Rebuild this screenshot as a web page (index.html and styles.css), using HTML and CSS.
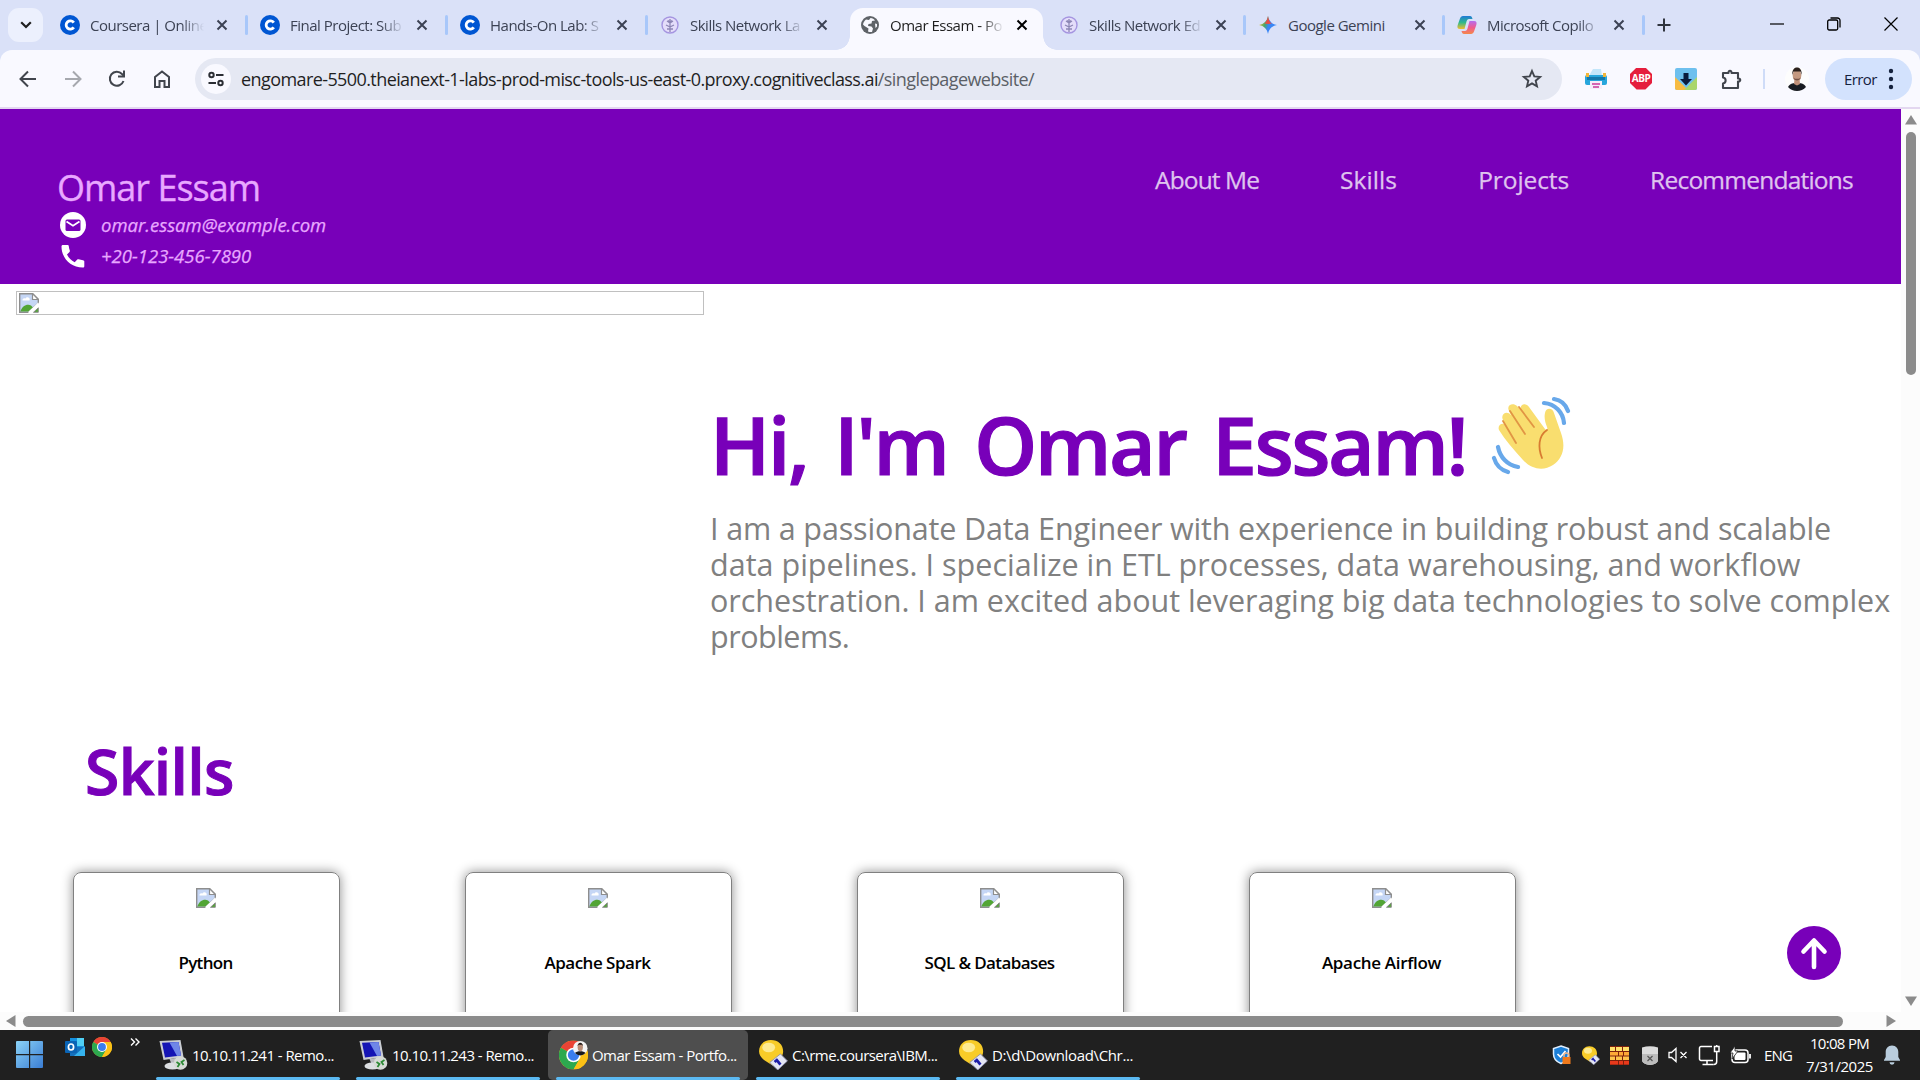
FILE: index.html
```html
<!DOCTYPE html>
<html lang="en">
<head>
<meta charset="utf-8">
<title>Omar Essam - Portfolio</title>
<link rel="stylesheet" href="styles.css">
</head>
<body>
<svg class="defs" aria-hidden="true">
  <symbol id="x" viewBox="0 0 12 12"><path d="M1.5 1.5l9 9M10.5 1.5l-9 9" fill="none" stroke="currentColor" stroke-width="2"/></symbol>
  <symbol id="coursera" viewBox="0 0 20 20"><circle cx="10" cy="10" r="10" fill="#0056d2"/><path d="M13.8 7.6A4.2 4.2 0 1 0 13.8 12.4" fill="none" stroke="#fff" stroke-width="2.8"/></symbol>
  <symbol id="network" viewBox="0 0 20 20"><circle cx="10" cy="10" r="8" fill="#e4ddfa" stroke="#a595e0" stroke-width="1.4"/><path d="M10 4v13M10 8l-3-2M10 8l3-2M10 12l-4-2M10 12l4-2M10 14l-3 0M10 14l3 0M8 5.5l2 1.5 2-1.5" fill="none" stroke="#8d87b5" stroke-width="1.3"/></symbol>
  <symbol id="broken" viewBox="0 0 20 20"><path d="M.7.7h13l5.6 5.6v4L9 19.3H.7z" fill="#c5d6f5" stroke="#8e8e8e" stroke-width="1.4"/><path d="M13.5.7v5.8h5.8z" fill="#fff" stroke="#8e8e8e" stroke-width="1.2"/><path d="M3.5 7.5a2 2 0 0 1 3-2 2.2 2.2 0 0 1 4 2z" fill="#fff"/><path d="M1.4 18.6c1.5-5 6-8 10.6-6.2l2 2-4.600 4.200z" fill="#52a535"/><path d="M14.500 19.300l4.800-4.500v4.500z" fill="#52a535" stroke="#8e8e8e"/><path d="M10 20L20 10.500" stroke="#fff" stroke-width="2.600"/></symbol>
  <symbol id="chrome" viewBox="0 0 24 24"><circle cx="12" cy="12" r="12" fill="#fbc116"/><path d="M12 12L1.600 6A12 12 0 0 1 22.400 6z" fill="#ea4335"/><path d="M12 12L1.600 6A12 12 0 0 0 12 24l5.200-9z" fill="#2da94f"/><path d="M12 6h10.400A12 12 0 0 1 12 24l5.200-9z" fill="#fbc116"/><circle cx="12" cy="12" r="6" fill="#fff"/><circle cx="12" cy="12" r="4.700" fill="#3b7ded"/></symbol>
  <symbol id="remote" viewBox="0 0 28 30"><path d="M0 1l21-1 3 17-20 3z" fill="#c9ccd2"/><path d="M2.500 2.800L19 2l2.500 13.500-16 2z" fill="#1414b4"/><path d="M10 2.400L19 2l2.500 13.500-4 .5z" fill="#6f86e8"/><path d="M10 19l6-1 1 6h-5z" fill="#b9bcc0"/><ellipse cx="13" cy="26" rx="8" ry="3.600" fill="#dcdfe2"/><circle cx="21" cy="23" r="6.800" fill="#d6dad6"/><path d="M17 22l3 2-2 3M25 20l-3 2 2 3" fill="none" stroke="#2c8a35" stroke-width="1.800"/></symbol>
  <symbol id="bulb" viewBox="0 0 27 28"><path d="M11 0c7 0 11.500 4.500 11.500 10.500 0 4-2 6-4 8.500L13 24 5 19C2 16.500 0 14 0 10.500 0 4.500 4.500 0 11 0z" fill="#f8cc28"/><ellipse cx="9" cy="7" rx="6" ry="4.500" fill="#fdeb92"/><path d="M10 21l10-8 6.500 6.500-9 8.500z" fill="#e4e6f4" stroke="#8d8fb0" stroke-width=".8"/><path d="M16 18l4 5M14.500 20.500l3-2.500" stroke="#1d1da8" stroke-width="2.600"/></symbol>
</svg>

<header class="tabs">
  <button class="tab-search"><svg width="12" height="8" viewBox="0 0 12 8"><path d="M1.200 1.200L6 6l4.800-4.800" fill="none" stroke="#1f1f1f" stroke-width="2.200"/></svg></button>
  <div class="tab"><svg class="fav"><use href="#coursera"/></svg><span class="title">Coursera | Online</span><svg class="x"><use href="#x"/></svg></div>
  <div class="tab sep"><svg class="fav"><use href="#coursera"/></svg><span class="title">Final Project: Sub</span><svg class="x"><use href="#x"/></svg></div>
  <div class="tab sep"><svg class="fav"><use href="#coursera"/></svg><span class="title">Hands-On Lab: S</span><svg class="x"><use href="#x"/></svg></div>
  <div class="tab sep"><svg class="fav"><use href="#network"/></svg><span class="title">Skills Network La</span><svg class="x"><use href="#x"/></svg></div>
  <div class="tab active"><svg class="fav" viewBox="0 0 20 20"><circle cx="10" cy="10" r="9" fill="#5f6368"/><path d="M10.500 3c2 0 3.500 1 4.500 2.500l-3 .5-.5 2.500-3 .5-.5 2 3.500.5 1.500 2-1 3.500a7 7 0 0 1-4-.5l.5-3L4.500 11 3 9.500c.3-2 1.500-4 3-5L9 5zM15 8.500l2 .5v2.500l-1.500 1.500z" fill="#f9f9ff"/></svg><span class="title">Omar Essam - Po</span><svg class="x"><use href="#x"/></svg></div>
  <div class="tab narrow"><svg class="fav"><use href="#network"/></svg><span class="title">Skills Network Ed</span><svg class="x"><use href="#x"/></svg></div>
  <div class="tab narrow sep"><svg class="fav" viewBox="0 0 20 20"><defs><linearGradient id="gem" x1="0" y1=".3" x2="1" y2=".6"><stop offset="0" stop-color="#f6c026"/><stop offset=".35" stop-color="#45a86a"/><stop offset=".55" stop-color="#3a86f5"/></linearGradient></defs><path d="M10 1c.9 5 4 8.100 9 9-5 .9-8.100 4-9 9-.9-5-4-8.100-9-9 5-.9 8.100-4 9-9z" fill="url(#gem)"/><path d="M10 1c.9 5 2 6.500 4 7.600L10 9 6.500 8.500C8.500 7 9.500 4 10 1z" fill="#ea4c45"/></svg><span class="title full">Google Gemini</span><svg class="x"><use href="#x"/></svg></div>
  <div class="tab narrow sep"><svg class="fav" viewBox="0 0 20 20"><defs><linearGradient id="ca" x1="0" y1="0" x2="0" y2="1"><stop offset="0" stop-color="#1f79d8"/><stop offset=".5" stop-color="#2fb98c"/><stop offset="1" stop-color="#f2bd2d"/></linearGradient><linearGradient id="cb" x1="0" y1="0" x2="0" y2="1"><stop offset="0" stop-color="#b56cf0"/><stop offset=".5" stop-color="#ee5c8f"/><stop offset="1" stop-color="#f5884a"/></linearGradient></defs><path d="M6 1h7c1.500 0 2 1 2.500 3H12c-1.500 0-2 1-2.500 2.500L7.500 14H3c-2.500 0-3-1.500-2.300-4L3 3.500C3.500 2 4.500 1 6 1z" fill="url(#ca)"/><path d="M14 19H7c-1.500 0-2-1-2.500-3H8c1.500 0 2-1 2.500-2.500L12.500 6H17c2.500 0 3 1.500 2.300 4L17 16.500c-.5 1.500-1.500 2.500-3 2.500z" fill="url(#cb)"/></svg><span class="title">Microsoft Copilo</span><svg class="x"><use href="#x"/></svg></div>
  <div class="newtab sep"><svg width="14" height="14" viewBox="0 0 14 14"><path d="M7 .5v13M.5 7h13" stroke="#30353f" stroke-width="2"/></svg></div>
  <div class="wincontrols">
    <svg width="14" height="14" viewBox="0 0 14 14"><path d="M0 7h14" stroke="#000" stroke-width="1.200"/></svg>
    <svg width="14" height="14" viewBox="0 0 14 14" fill="none" stroke="#000" stroke-width="1.300"><rect x=".7" y="3" width="10" height="10" rx="1.500"/><path d="M3.500 1h7A2.500 2.500 0 0 1 13 3.500V10.500"/></svg>
    <svg width="14" height="14" viewBox="0 0 14 14"><path d="M.5.5l13 13M13.500.5l-13 13" stroke="#000" stroke-width="1.200"/></svg>
  </div>
</header>

<div class="toolbarwrap"><nav class="toolbar">
  <div class="navicons">
    <svg width="18" height="18" viewBox="0 0 18 18" fill="none" stroke="#41454d" stroke-width="2"><path d="M17 9H2M9 1.500L1.500 9 9 16.500"/></svg>
    <svg width="18" height="18" viewBox="0 0 18 18" fill="none" stroke="#a6a8ae" stroke-width="2"><path d="M1 9h15M9 1.500L16.500 9 9 16.500"/></svg>
    <svg width="18" height="18" viewBox="0 0 18 18" fill="none" stroke="#41454d" stroke-width="2"><path d="M15.500 11A7 7 0 1 1 14 4l2 2"/><path d="M16 .5v6h-6"/></svg>
    <svg width="18" height="18" viewBox="0 0 18 18" fill="none" stroke="#41454d" stroke-width="2"><path d="M2 7l7-5.500L16 7v10h-4.500v-6h-5v6H2z"/></svg>
  </div>
  <div class="omnibox">
    <span class="tune"><svg width="16" height="16" viewBox="0 0 16 16" fill="none" stroke="#2b2e34" stroke-width="2"><circle cx="3.500" cy="4" r="2.200"/><path d="M8 4h7.500M.5 12H8"/><circle cx="12.500" cy="12" r="2.200"/></svg></span>
    <span class="url">engomare-5500.theianext-1-labs-prod-misc-tools-us-east-0.proxy.cognitiveclass.ai<span class="path">/singlepagewebsite/</span></span>
    <svg class="star" width="20" height="20" viewBox="0 0 20 20"><path d="M10 2l2.300 5.400 5.800.5-4.400 3.800 1.300 5.700-5-3-5 3 1.300-5.700L1.900 7.900l5.800-.5z" fill="none" stroke="#41454d" stroke-width="1.900"/></svg>
  </div>
  <div class="exts">
    <svg width="22" height="22" viewBox="0 0 22 22"><path d="M5 6l3-5h8l1 7H5z" fill="#c3e6fa"/><rect x="0" y="7" width="22" height="10" rx="2" fill="#27a6dc"/><path d="M1 9V5h3v4zM18 9V5h3v4z" fill="#f2b63a"/><rect x="2" y="9" width="18" height="3" fill="#1478aa"/><rect x="5" y="13" width="12" height="8" fill="#f4eefa"/><path d="M7 16h8M8 19h6" stroke="#c93a9c" stroke-width="1.500"/></svg>
    <span class="abp">ABP</span>
    <svg width="22" height="22" viewBox="0 0 22 22"><rect width="22" height="22" rx="2" fill="#6ec0ee"/><path d="M0 9l13 13H2a2 2 0 0 1-2-2z" fill="#f7bb42"/><path d="M22 9L9 22h11a2 2 0 0 0 2-2z" fill="#a9d66c"/><path d="M8.500 5h5v6H17l-6 6.500L5 11h3.500z" fill="#0a1b3d"/></svg>
    <svg width="22" height="22" viewBox="0 0 22 22"><path d="M3 5h5.500c-.5-3 3.500-3 3 0H18v5.500c3-.5 3 3.500 0 3V20H3v-4.500c3.500-.5 3.500-5.500 0-6z" fill="none" stroke="#41454d" stroke-width="2.100" stroke-linejoin="round"/></svg>
  </div>
  <i class="bar"></i>
  <svg class="avatar" width="24" height="24" viewBox="0 0 24 24"><circle cx="12" cy="12" r="12" fill="#fdfdfd"/><path d="M3 20c2-4 6-4 9-4s7 0 9 4a12 12 0 0 1-18 0z" fill="#191c22"/><path d="M9.500 12h5l.5 5-3 1.500L9 17z" fill="#c09078"/><ellipse cx="12" cy="8.500" rx="4.300" ry="6" fill="#c39880"/><path d="M7.300 8C7 3 9 .5 12 .5S17 3 16.700 8L15.500 4.500h-7z" fill="#2b211d"/><path d="M8.300 10.500c1 4 6.400 4 7.400 0l-1.700 1.200h-4z" fill="#735145"/></svg>
  <div class="errorpill"><span>Error</span><svg width="6" height="22" viewBox="0 0 6 22" fill="#14213d"><circle cx="3" cy="3" r="2.200"/><circle cx="3" cy="11" r="2.200"/><circle cx="3" cy="19" r="2.200"/></svg></div>
</nav></div>

<div class="viewport">
  <main class="page">
    <section class="top">
      <div class="ident">
        <div class="name">Omar Essam</div>
        <div class="contact"><svg width="26" height="26" viewBox="0 0 26 26"><circle cx="13" cy="13" r="13" fill="#fff"/><rect x="5.500" y="7.500" width="15" height="11.500" rx="1.500" fill="#7800b9"/><path d="M6.500 9.500l6.500 4.200 6.500-4.200" fill="none" stroke="#fff" stroke-width="1.800"/></svg><span>omar.essam@example.com</span></div>
        <div class="contact"><svg width="26" height="26" viewBox="0 0 26 26"><path d="M1.500 3.500c0-1 .5-1.500 1.500-1.500h4.500c.8 0 1.200.4 1.300 1.200.2 1.600.5 3 1 4.300.2.600 0 1-.3 1.400L7 11.500c1.700 3.400 4.300 6 7.700 7.700l2.600-2.600c.4-.3.800-.5 1.400-.3 1.300.500 2.700.800 4.300.900.800.100 1.300.600 1.300 1.400V23c0 1-.5 1.500-1.500 1.500C10.500 24.500 1.500 15 1.500 3.500z" fill="#fff"/></svg><span>+20-123-456-7890</span></div>
      </div>
      <nav class="links">
        <a class="n1">About Me</a><a class="n2">Skills</a><a class="n3">Projects</a><a class="n4">Recommendations</a>
      </nav>
    </section>
    <section class="about">
      <div class="portrait"><svg class="broken"><use href="#broken"/></svg></div>
      <div class="intro">
        <h1><span>Hi, I'm Omar Essam!</span><svg class="wave" width="78" height="78" viewBox="0 0 78 78"><g transform="translate(-2 -1)"><path d="M9 34c-2-5 4-9 7-4l-3-6c-3-6 4-10 8-5l-2-4c-3-6 4-9 8-5l4 4c-2-6 5-8 8-3l16 22c2 2 3 1 2-2-2-5-3-10-2-14 1-6 8-5 9 0l7 20c5 14 2 25-8 32-9 6-21 5-30-5C24 54 15 44 9 34z" fill="#f9de6f"/><path d="M13 25l13 22M20 15l15 23M29 11l15 20" fill="none" stroke="#e19544" stroke-width="1.800" stroke-linecap="round"/><path d="M57 34c-9 6-9 18-5 28" fill="none" stroke="#d87c31" stroke-width="1.800" stroke-linecap="round"/></g><g fill="none" stroke="#68a8ea" stroke-width="4.200" stroke-linecap="round"><path d="M52 6c11 1 19 9 20 20M62 2c7 1 12 6 14 12M6 50c2 10 9 18 20 20M2 61c2 7 7 12 14 14"/></g></svg></h1>
        <p><span class="l1">I am a passionate Data Engineer with experience in building robust and scalable</span><span class="l2">data pipelines. I specialize in ETL processes, data warehousing, and workflow</span><span class="l3">orchestration. I am excited about leveraging big data technologies to solve complex</span><span class="l4">problems.</span></p>
      </div>
    </section>
    <section class="skills">
      <h2><span>Skills</span></h2>
      <div class="cards">
        <article><svg class="broken"><use href="#broken"/></svg><span class="c1">Python</span></article>
        <article><svg class="broken"><use href="#broken"/></svg><span class="c2">Apache Spark</span></article>
        <article><svg class="broken"><use href="#broken"/></svg><span class="c3">SQL &amp; Databases</span></article>
        <article><svg class="broken"><use href="#broken"/></svg><span class="c4">Apache Airflow</span></article>
      </div>
    </section>
    <a class="scrolltop"><svg width="54" height="54" viewBox="0 0 54 54"><circle cx="27" cy="27" r="27" fill="#7800b9"/><path d="M27 41V15M16.500 25.500L27 14.500l10.500 11" fill="none" stroke="#fff" stroke-width="4.600" stroke-linecap="round" stroke-linejoin="round"/></svg></a>
  </main>
  <div class="vscroll"><svg width="12" height="10" viewBox="0 0 12 10"><path d="M6 0l6 9.500H0z" fill="#8b8b8b"/></svg><i></i><svg width="12" height="10" viewBox="0 0 12 10"><path d="M6 10l6-9.500H0z" fill="#8b8b8b"/></svg></div>
</div>
<div class="hscroll"><svg width="10" height="12" viewBox="0 0 10 12"><path d="M0 6l9.500-6v12z" fill="#8b8b8b"/></svg><i></i><svg width="10" height="12" viewBox="0 0 10 12"><path d="M10 6L.5 0v12z" fill="#8b8b8b"/></svg></div>

<footer class="taskbar">
  <svg class="start" width="27" height="27" viewBox="0 0 27 27"><defs><linearGradient id="win" x1="0" y1="0" x2="1" y2="1"><stop offset="0" stop-color="#8bd3f7"/><stop offset="1" stop-color="#3a7dd4"/></linearGradient></defs><path d="M1 0h12v13H0V1a1 1 0 0 1 1-1zM14.200 0H26a1 1 0 0 1 1 1v12H14.200zM0 14.200h13V27H1a1 1 0 0 1-1-1zM14.200 14.200H27V26a1 1 0 0 1-1 1H14.200z" fill="url(#win)"/></svg>
  <div class="quick">
    <svg width="20" height="20" viewBox="0 0 20 20"><rect x="5" y="1" width="14" height="17" fill="#1490df"/><rect x="12" y="1" width="7" height="8" fill="#50d0f5"/><path d="M5 10h15v9H5z" fill="#1570bd"/><path d="M20 9v10H9z" fill="#35b3ee"/><rect y="4" width="12" height="12" rx="1" fill="#0a64b5"/><ellipse cx="6" cy="10" rx="2.600" ry="3" fill="none" stroke="#fff" stroke-width="1.700"/></svg>
    <svg width="20" height="20"><use href="#chrome"/></svg>
    <svg width="10" height="8" viewBox="0 0 10 8"><path d="M1 .5L4.500 4 1 7.500M5.500.5L9 4 5.500 7.500" fill="none" stroke="#fff" stroke-width="1.400"/></svg>
  </div>
  <div class="task"><svg class="ti"><use href="#remote"/></svg><span>10.10.11.241 - Remo...</span></div>
  <div class="task"><svg class="ti"><use href="#remote"/></svg><span>10.10.11.243 - Remo...</span></div>
  <div class="task on"><svg class="ti" viewBox="0 0 30 30"><use href="#chrome" width="30" height="30"/><circle cx="22" cy="8" r="7.500" fill="#f4f4f4"/><path d="M16.500 13c2-2.500 9-2.500 11 0a7.500 7.500 0 0 1-11 0z" fill="#17181c"/><ellipse cx="22" cy="7" rx="2.700" ry="4.200" fill="#b98d77"/><path d="M19.200 6c0-5 5.600-5 5.600 0l-1-1.500h-3.600z" fill="#221a18"/></svg><span>Omar Essam - Portfo...</span></div>
  <div class="task"><svg class="ti"><use href="#bulb"/></svg><span>C:\rme.coursera\IBM...</span></div>
  <div class="task"><svg class="ti"><use href="#bulb"/></svg><span class="dl">D:\d\Download\Chr...</span></div>
  <div class="tray">
    <svg width="20" height="20" viewBox="0 0 20 20"><path d="M9 1l7.500 2.500V9c0 5-3.500 8-7.500 9.500C5 17 1.500 14 1.500 9V3.500z" fill="#1b7fd8" stroke="#dfefff" stroke-width="1.500"/><path d="M5.500 9l3 3 5-6" fill="none" stroke="#fff" stroke-width="1.700"/><path d="M12 12v-1.500a2.500 2.500 0 0 1 5 0V12" fill="none" stroke="#f0b58a" stroke-width="1.400"/><rect x="10.500" y="12" width="8" height="7" fill="#f07a1c"/></svg>
    <svg width="18" height="19"><use href="#bulb"/></svg>
    <svg width="19" height="19" viewBox="0 0 19 19"><rect width="19" height="19" fill="#7c200c"/><path d="M0 1h5v4H0zM6 1h6v4H6zM13 1h6v4h-6z" fill="#ffe06a"/><path d="M0 6h8v3.500H0zM9 6h4v3.500H9zM14 6h5v3.500h-5z" fill="#fdaa36"/><path d="M0 10.500h5V14H0zM6 10.500h6V14H6zM13 10.500h6V14h-6z" fill="#fdc34a"/><path d="M0 15h8v3.500H0zM9 15h4v3.500H9zM14 15h5v3.500h-5z" fill="#e8391c"/></svg>
    <svg class="usb" width="16" height="19" viewBox="0 0 16 19"><path d="M0 1.500Q8-1 16 1.500V14c0 3-4 4.500-8 5-4-.5-8-2-8-5z" fill="#dcdcdc"/><path d="M0 8h16v6c0 3-4 4.500-8 5-4-.5-8-2-8-5z" fill="#bcbcbc"/><path d="M5.500 10l5 5M10.500 10l-5 5" stroke="#555" stroke-width="1.200"/></svg>
    <svg width="20" height="16" viewBox="0 0 20 16" fill="none" stroke="#fff" stroke-width="1.300"><path d="M1 5.500h2.500L8 1.500v13l-4.500-4H1zM12.500 5l6 6M18.500 5l-6 6"/></svg>
    <svg width="22" height="21" viewBox="0 0 22 21" fill="none" stroke="#fff" stroke-width="1.500"><path d="M14 1.500H3a1.500 1.500 0 0 0-1.500 1.500v11A1.500 1.500 0 0 0 3 15.500h12M9 15.500v4M4.500 19.500h11M16.500 1.500h4.500v5h-4.500zM18.700 6.500v10q0 3-3 3M18.700 1v-1"/></svg>
    <svg width="21" height="18" viewBox="0 0 21 18"><rect x="2" y="4" width="16" height="12.500" rx="3" fill="none" stroke="#fff" stroke-width="1.500"/><rect x="4.500" y="6.500" width="11" height="7.500" rx="1" fill="#fff"/><path d="M20 8v4.500" stroke="#fff" stroke-width="1.800"/><path d="M5 0L0 7h3l-1 6 6-8H5z" fill="#fff" stroke="#202020" stroke-width=".8"/></svg>
    <span class="lang">ENG</span>
    <div class="clock"><span class="time">10:08 PM</span><span class="date">7/31/2025</span></div>
    <svg width="18" height="20" viewBox="0 0 18 20"><path d="M9 .5c4 0 6.300 3 6.300 6.500v5l1.700 3v.8H1V15l1.700-3V7C2.700 3.500 5 .5 9 .5zM6.500 17.200h5a2.500 2.500 0 0 1-5 0z" fill="#b9cddd"/></svg>
  </div>
</footer>
</body>
</html>
```
FILE: styles.css
```css
* { box-sizing: border-box; }
body { margin: 0; width: 1920px; height: 1080px; overflow: hidden; display: flex; flex-direction: column; background: #fff; font-family: "Open Sans", "Noto Sans", sans-serif; }
svg { display: block; flex: none; overflow: visible; }
.defs { position: absolute; width: 0; height: 0; }
span, a { white-space: nowrap; }

.tabs { height: 50px; flex: none; background: #dae1f8; display: flex; align-items: flex-start; padding-left: 8px; }
.tab-search { width: 35px; height: 34px; margin: 8px 7px 0 0; padding: 0; border: 0; border-radius: 11px; background: #ecf0fd; display: flex; align-items: center; justify-content: center; }
.tab { width: 200px; height: 42px; margin-top: 8px; display: flex; align-items: center; padding: 0 0 8px 10px; position: relative; color: #3c4254; }
.narrow { width: 199px; left: -1px; }
.fav { width: 20px; height: 20px; }
.title { width: 114px; margin-left: 10px; overflow: hidden; font-size: 15px; letter-spacing: -.5px; line-height: 24px; -webkit-mask-image: linear-gradient(90deg, #000 80%, transparent); mask-image: linear-gradient(90deg, #000 80%, transparent); }
.full { -webkit-mask-image: none; mask-image: none; }
.x { width: 12px; height: 12px; margin-left: 12px; color: #3c4254; }
.sep::before { content: ""; position: absolute; left: -5px; top: 7px; width: 3px; height: 20px; border-radius: 2px; background: #a8c7fa; }
.active { color: #1f1f1f; }
.active .x { color: #000; }
.active::before { content: ""; position: absolute; left: 0; right: 7px; top: 0; bottom: 0; background: #f9f9ff; border-radius: 13px 13px 0 0; }
.active::after { content: ""; position: absolute; left: -14px; right: -7px; bottom: 0; height: 14px; background: radial-gradient(circle at 0 0, transparent 13.500px, #f9f9ff 14px) left / 14px 14px no-repeat, radial-gradient(circle at 100% 0, transparent 13.500px, #f9f9ff 14px) right / 14px 14px no-repeat; }
.active > * { position: relative; }
.newtab { position: relative; margin-top: 8px; padding: 10px 0 0 10px; }
.wincontrols { margin: 17px 22px 0 auto; display: flex; gap: 43px; }

.toolbarwrap { background: #dae1f8; flex: none; }
.toolbar { height: 59px; background: #f9f9ff; border-radius: 12px 12px 0 0; border-bottom: 2px solid #e3d7f0; display: flex; align-items: center; padding: 0 8px 0 19px; }
.navicons { display: flex; gap: 26.500px; width: 176px; }
.omnibox { width: 1367px; height: 42px; border-radius: 21px; background: #e5e8f3; display: flex; align-items: center; padding-left: 6px; }
.tune { width: 30px; height: 30px; border-radius: 50%; background: #f9f9ff; display: flex; align-items: center; justify-content: center; }
.url { margin-left: 10px; font-size: 18px; letter-spacing: -.587px; line-height: 30px; color: #1f1f1f; }
.path { color: #5b5f66; }
.star { margin: 0 20px 0 auto; }
.exts { display: flex; align-items: center; gap: 23px; margin-left: 23px; }
.abp { width: 22px; height: 22px; background: #e51e3d; color: #fff; font-size: 10px; font-weight: 700; letter-spacing: -.5px; line-height: 21px; text-align: center; clip-path: polygon(30% 0, 70% 0, 100% 30%, 100% 70%, 70% 100%, 30% 100%, 0 70%, 0 30%); }
.bar { width: 2px; height: 20px; background: #cfdcf8; margin-left: 21px; }
.avatar { margin-left: 20px; }
.errorpill { margin-left: auto; width: 87px; height: 42px; border-radius: 21px; background: #d3e2fd; display: flex; align-items: center; justify-content: space-between; padding: 0 18px 0 19px; font-size: 15px; letter-spacing: -.6px; color: #14213d; }

.viewport { height: 903px; flex: none; display: flex; }
.page { width: 1901px; overflow: hidden; background: #fff; position: relative; }
.top { height: 175px; background: #7800b9; display: flex; justify-content: space-between; padding: 0 48px 0 57px; }
.name { margin-top: 55px; height: 45px; line-height: 48px; font-size: 36px; letter-spacing: -1px; color: #e8a8ff; -webkit-text-stroke: .3px #e8a8ff; }
.contact { display: flex; align-items: center; gap: 15px; height: 31px; margin-left: 3px; font-size: 18.500px; font-style: italic; color: #e8a8ff; -webkit-text-stroke: .25px #e8a8ff; }
.links { display: flex; gap: 81px; margin-top: 56px; font-size: 24.500px; line-height: 30px; color: #dfc4ee; -webkit-text-stroke: .25px #dfc4ee; }
.n1 { letter-spacing: -.89px; }
.n2 { letter-spacing: .08px; }
.n3 { letter-spacing: -.08px; }
.n4 { letter-spacing: -.77px; }
.about { height: 376px; display: flex; }
.portrait { flex: none; margin: 7px 0 0 16px; width: 688px; height: 24px; border: 1px solid #c0c0c0; padding: 1px 2px; }
.broken { width: 20px; height: 20px; }
.intro { flex: none; margin-left: 6px; padding-top: 100px; }
h1 { margin: 0; height: 120px; line-height: 119px; font-size: 80px; font-weight: 600; letter-spacing: -2.200px; word-spacing: 8px; color: #7800b9; -webkit-text-stroke: 1.200px #7800b9; display: flex; }
h1 span { width: 754px; }
.wave { margin: 13px 0 0 28px; }
p { margin: 6px 0 0; font-size: 30.500px; line-height: 36px; color: #808080; display: flex; flex-direction: column; align-items: flex-start; }
.l1 { letter-spacing: -.15px; }
.l2 { letter-spacing: .02px; }
.l3 { letter-spacing: -.02px; }
.l4 { letter-spacing: -.5px; }
.skills { padding: 0 0 0 73px; }
h2 { margin: 0 0 0 12px; padding-top: 69px; height: 212px; line-height: 84px; font-size: 62.500px; font-weight: 600; letter-spacing: -.700px; color: #7800b9; -webkit-text-stroke: 1px #7800b9; }
.cards { display: flex; gap: 125px; }
article { width: 267px; height: 200px; border: 1px solid #808080; border-radius: 8px; box-shadow: 0 0 12px rgba(0, 0, 0, .45); display: flex; flex-direction: column; align-items: center; padding: 15px 2px 0 0; gap: 43px; font-size: 17px; line-height: 24px; font-weight: 600; color: #000; }
.c1 { letter-spacing: -.7px; }
.c2 { letter-spacing: -.5px; }
.c3 { letter-spacing: -.6px; }
.c4 { letter-spacing: -.32px; }
.scrolltop { position: absolute; left: 1787px; top: 817px; }
.vscroll { width: 19px; background: #fcfcfc; display: flex; flex-direction: column; align-items: center; padding: 6px 0; }
.vscroll i { width: 10px; height: 243px; margin: 7px 0 auto; border-radius: 5px; background: #8b8b8b; }
.hscroll { height: 18px; flex: none; background: #fcfcfc; display: flex; align-items: center; padding: 0 24px 0 6px; }
.hscroll i { width: 1820px; height: 11px; margin: 0 auto 0 7px; border-radius: 6px; background: #8b8b8b; }

.taskbar { height: 50px; flex: none; background: #202020; color: #fff; display: flex; }
.start { margin: 11px 0 0 16px; }
.quick { width: 105px; display: flex; gap: 7px; padding: 7px 0 0 22px; }
.quick svg:last-child { margin: 1px 0 0 11px; }
.task { width: 200px; height: 50px; padding: 0 8px 0 11px; display: flex; align-items: center; font-size: 15px; letter-spacing: -.55px; position: relative; }
.task::after { content: ""; position: absolute; left: 8px; right: 8px; bottom: 0; height: 3px; border-radius: 2px; background: #5bb9f2; }
.dl { letter-spacing: -.35px; }
.ti { width: 29px; height: 30px; margin-right: 4px; }
.on { background: #4e4e4e; border-radius: 5px; }
.tray { margin-left: auto; display: flex; align-items: center; padding-right: 19px; gap: 10px; font-size: 15px; }
.usb { margin-left: 3px; }
.lang { margin: 0 4px 0 3px; letter-spacing: -.85px; }
.clock { width: 67px; display: flex; flex-direction: column; align-items: center; line-height: 23px; }
.time { letter-spacing: -.7px; }
.date { letter-spacing: -.45px; }
```
